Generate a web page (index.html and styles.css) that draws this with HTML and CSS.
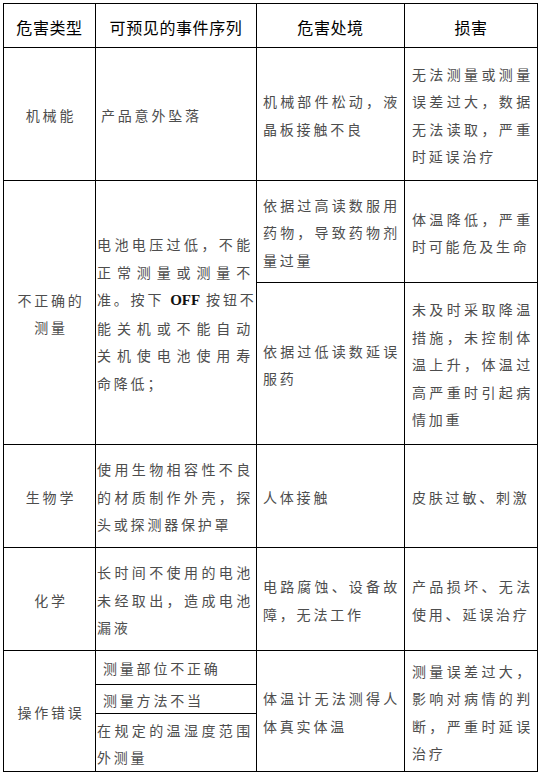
FILE: index.html
```html
<!DOCTYPE html>
<html lang="zh-CN">
<head>
<meta charset="utf-8">
<title>危害分析表</title>
<link rel="stylesheet" href="styles.css">
</head>
<body>
<div class="table">
  <div class="cell head">危害类型</div>
  <div class="cell head">可预见的事件序列</div>
  <div class="cell head">危害处境</div>
  <div class="cell head">损害</div>

  <div class="cell c1"><span class="l">机械能</span></div>
  <div class="cell c2 ind4"><span class="l">产品意外坠落</span></div>
  <div class="cell c3"><span class="l">机械部件松动，液</span><span class="l">晶板接触不良</span></div>
  <div class="cell c4"><span class="l">无法测量或测量</span><span class="l">误差过大，数据</span><span class="l">无法读取，严重</span><span class="l">时延误治疗</span></div>

  <div class="cell c1 span2"><span class="l">不正确的</span><span class="l">测量</span></div>
  <div class="cell c2 span2"><span class="l">电池电压过低，不能</span><span class="l">正常测量或测量不</span><span class="l">准。按下 <b class="en">OFF</b> 按钮不</span><span class="l">能关机或不能自动</span><span class="l">关机使电池使用寿</span><span class="l">命降低；</span></div>
  <div class="cell c3"><span class="l">依据过高读数服用</span><span class="l">药物，导致药物剂</span><span class="l">量过量</span></div>
  <div class="cell c4"><span class="l">体温降低，严重</span><span class="l">时可能危及生命</span></div>
  <div class="cell c3"><span class="l">依据过低读数延误</span><span class="l">服药</span></div>
  <div class="cell c4"><span class="l">未及时采取降温</span><span class="l">措施，未控制体</span><span class="l">温上升，体温过</span><span class="l">高严重时引起病</span><span class="l">情加重</span></div>

  <div class="cell c1"><span class="l">生物学</span></div>
  <div class="cell c2"><span class="l">使用生物相容性不良</span><span class="l">的材质制作外壳，探</span><span class="l">头或探测器保护罩</span></div>
  <div class="cell c3"><span class="l">人体接触</span></div>
  <div class="cell c4"><span class="l">皮肤过敏、刺激</span></div>

  <div class="cell c1"><span class="l">化学</span></div>
  <div class="cell c2"><span class="l">长时间不使用的电池</span><span class="l">未经取出，造成电池</span><span class="l">漏液</span></div>
  <div class="cell c3"><span class="l">电路腐蚀、设备故</span><span class="l">障，无法工作</span></div>
  <div class="cell c4"><span class="l">产品损坏、无法</span><span class="l">使用、延误治疗</span></div>

  <div class="cell c1 span3"><span class="l">操作错误</span></div>
  <div class="cell c2 ind6"><span class="l">测量部位不正确</span></div>
  <div class="cell c3 span3"><span class="l">体温计无法测得人</span><span class="l">体真实体温</span></div>
  <div class="cell c4 span3"><span class="l">测量误差过大，</span><span class="l">影响对病情的判</span><span class="l">断，严重时延误</span><span class="l">治疗</span></div>
  <div class="cell c2 ind6"><span class="l">测量方法不当</span></div>
  <div class="cell c2"><span class="l">在规定的温湿度范围</span><span class="l">外测量</span></div>
</div>
</body>
</html>
```

FILE: styles.css
```css
html, body {
  margin: 0;
  padding: 0;
  background: #ffffff;
}

.table {
  display: grid;
  grid-template-columns: 92px 161px 148px 133px;
  grid-template-rows: 44px 133px 102px 162px 103px 103px 34px 29px 58px;
  width: max-content;
  margin: 3px 0 0 3px;
  border-top: 1px solid #000;
  border-left: 1px solid #000;
  font-family: "Noto Sans CJK SC", "Noto Sans", sans-serif;
}

.cell {
  box-sizing: border-box;
  border-right: 1px solid #000;
  border-bottom: 1px solid #000;
  display: flex;
  flex-direction: column;
  justify-content: center;
  font-size: 14px;
  line-height: 27.5px;
  letter-spacing: 2.8px;
  color: #4d4d4d;
  padding-top: 3px;
}

.head {
  align-items: center;
  font-size: 16px;
  letter-spacing: 0.6px;
  color: #000;
  line-height: 22px;
  padding-top: 3px;
}

.l {
  display: block;
  text-align: justify;
  text-align-last: justify;
  white-space: nowrap;
}

.l:last-child {
  text-align-last: auto;
}

.c1 {
  align-items: center;
  padding-left: 3px;
}

.c1 .l:last-child {
  text-align-last: center;
}

.c2 {
  padding: 3px 3px 0 1px;
}

.c3 {
  padding: 3px 4px 0 6px;
}

.c4 {
  padding: 3px 4px 0 7px;
}

.ind4 {
  padding-left: 5px;
}

.ind6 {
  padding-left: 7px;
}

.span2 {
  grid-row: span 2;
}

.span3 {
  grid-row: span 3;
}

.en {
  font-family: "Liberation Serif", "Times New Roman", serif;
  font-weight: bold;
  font-size: 15px;
  letter-spacing: 0;
  color: #111;
}
```
